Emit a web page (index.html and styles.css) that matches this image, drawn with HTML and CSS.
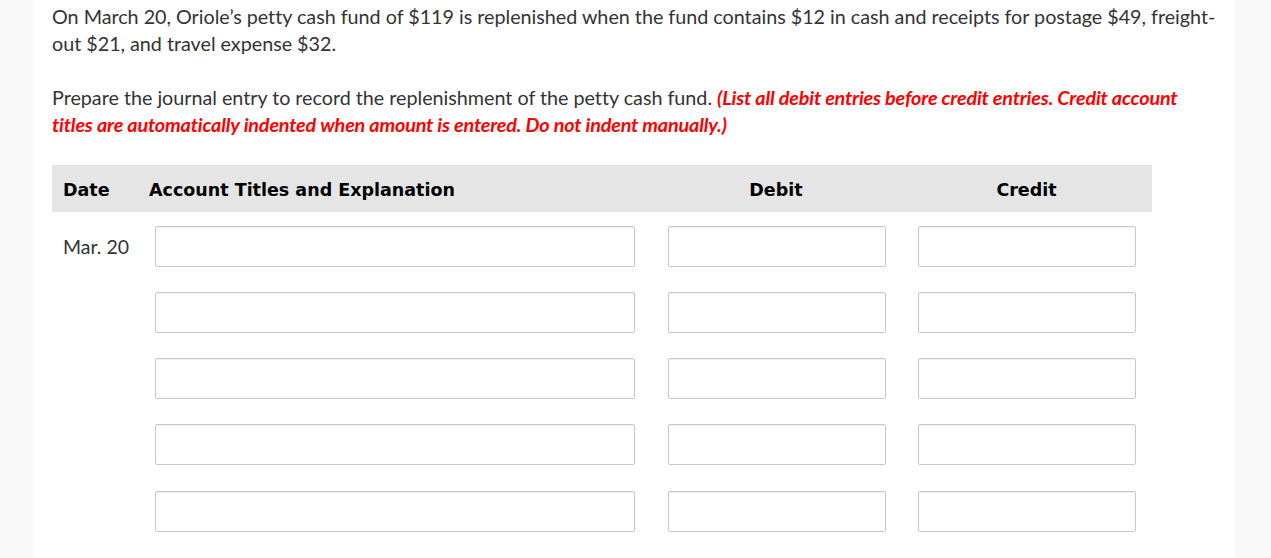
FILE: index.html
```html
<!DOCTYPE html>
<html>
<head>
<meta charset="utf-8">
<link rel="stylesheet" href="styles.css">
</head>
<body>
<div class="page">
  <p class="question">On March 20, Oriole’s petty cash fund of $119 is replenished when the fund contains $12 in cash and receipts for postage $49, freight-out $21, and travel expense $32.</p>
  <p class="question">Prepare the journal entry to record the replenishment of the petty cash fund. <em class="note">(List all debit entries before credit entries. Credit account titles are automatically indented when amount is entered. Do not indent manually.)</em></p>
  <div class="journal">
    <div class="head">
      <div class="h-date">Date</div>
      <div class="h-acct">Account Titles and Explanation</div>
      <div class="h-num">Debit</div>
      <div class="h-num">Credit</div>
    </div>
    <div class="row">
      <div class="date">Mar. 20</div>
      <div class="cell acct"><input type="text"></div>
      <div class="cell num"><input type="text"></div>
      <div class="cell num"><input type="text"></div>
    </div>
    <div class="row">
      <div class="date"></div>
      <div class="cell acct"><input type="text"></div>
      <div class="cell num"><input type="text"></div>
      <div class="cell num"><input type="text"></div>
    </div>
    <div class="row">
      <div class="date"></div>
      <div class="cell acct"><input type="text"></div>
      <div class="cell num"><input type="text"></div>
      <div class="cell num"><input type="text"></div>
    </div>
    <div class="row">
      <div class="date"></div>
      <div class="cell acct"><input type="text"></div>
      <div class="cell num"><input type="text"></div>
      <div class="cell num"><input type="text"></div>
    </div>
    <div class="row">
      <div class="date"></div>
      <div class="cell acct"><input type="text"></div>
      <div class="cell num"><input type="text"></div>
      <div class="cell num"><input type="text"></div>
    </div>
  </div>
</div>
</body>
</html>
```
FILE: styles.css
```css
html, body {
  margin: 0;
  padding: 0;
  background: #f8f8f8;
  height: 100%;
}
body {
  font-family: Lato, "Open Sans", sans-serif;
  color: #333;
}
.page {
  margin-left: 33px;
  width: 1201px;
  min-height: 100%;
  background: #fff;
  box-sizing: border-box;
  padding: 3px 16px 0 19px;
}
.question {
  margin: 0 0 27px 0;
  font-size: 19.75px;
  line-height: 27px;
  letter-spacing: -0.02px;
}
.note {
  color: #ff0000;
  font-weight: 700;
  font-style: italic;
  letter-spacing: -0.15px;
}
.journal {
  width: 1100px;
}
.head, .row {
  display: grid;
  grid-template-columns: 97px 502px 250px 251px;
}
.head {
  background: #e5e5e5;
  height: 47px;
  box-sizing: border-box;
  padding-top: 3px;
  align-items: center;
  font-family: "DejaVu Sans", Verdana, sans-serif;
  font-weight: 700;
  font-size: 17.5px;
  color: #000;
  margin-top: 7px;
}
.h-date {
  padding-left: 11px;
}
.h-num {
  text-align: center;
}
.row {
  margin-top: 13.5px;
  height: 41px;
  align-items: center;
}
.row + .row {
  margin-top: 25.3px;
}
.date {
  padding-left: 11px;
  font-size: 19.5px;
}
.cell input {
  display: block;
  box-sizing: border-box;
  height: 41px;
  border: 1px solid #c8c8c8;
  border-radius: 2px;
  box-shadow: inset 0 1px 1px rgba(0,0,0,0.06);
  background: #fff;
  margin: 0;
  padding: 0 6px;
}
.acct input {
  margin-left: 6px;
  width: 480px;
}
.num input {
  margin-left: 17px;
  width: 218px;
}
```
